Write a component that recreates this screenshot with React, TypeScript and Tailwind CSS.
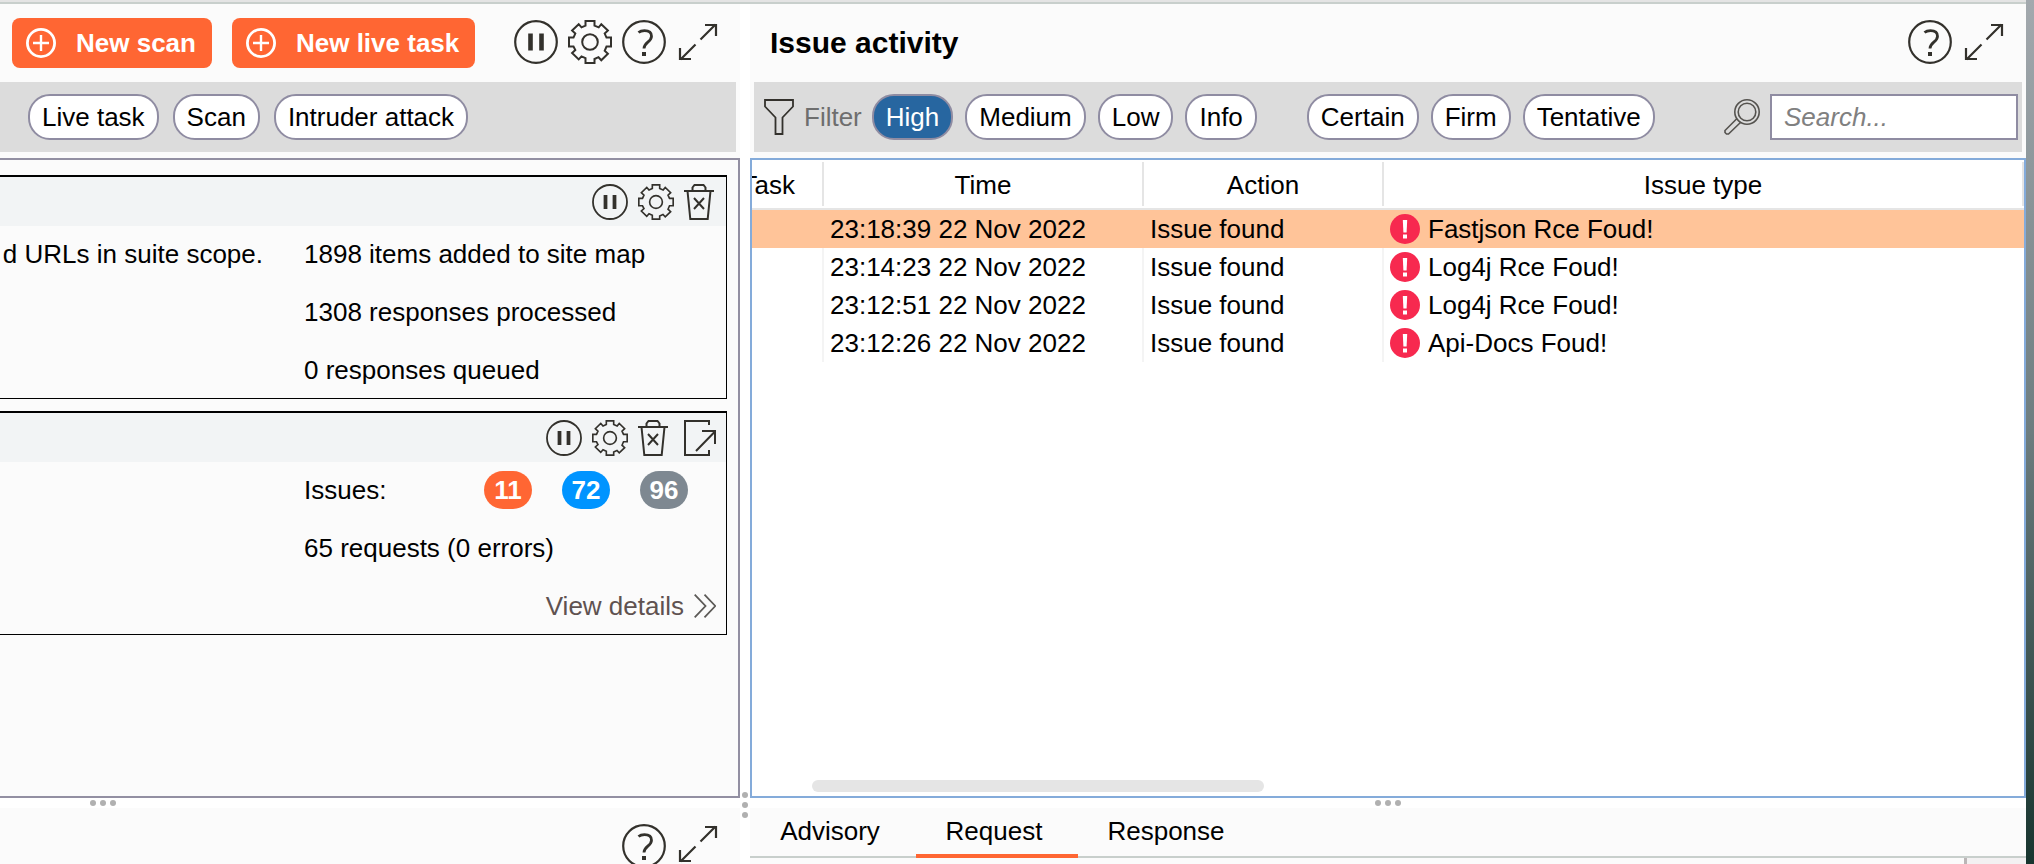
import type { ReactNode } from "react";

type IconProps = { className?: string };

const INK = "#33312c";

function PlusCircleIcon() {
  return (
    <svg className="size-[30px] shrink-0" viewBox="0 0 30 30" fill="none" stroke="#fff" aria-hidden="true">
      <circle cx="15" cy="15" r="13.6" strokeWidth="2.8" />
      <path d="M15 7v16M7 15h16" strokeWidth="2.4" />
    </svg>
  );
}

function PauseIcon({ className }: IconProps) {
  return (
    <svg className={className} viewBox="0 0 44 44" fill="none" stroke={INK} aria-hidden="true">
      <circle cx="22" cy="22" r="20.8" strokeWidth="2.2" />
      <path d="M16.5 13.5v17M27.5 13.5v17" strokeWidth="4.6" />
    </svg>
  );
}

function GearIcon({ className }: IconProps) {
  return (
    <svg className={className} viewBox="0 0 44 44" fill="none" stroke={INK} strokeWidth="2" aria-hidden="true">
      <circle cx="22" cy="22" r="7.8" />
      <path d="M17.5 1h9v4.6l4.2 1.8 2.6-3.2 6.6 6.4-3.2 3 1.8 4H43v9h-4.5l-1.8 4.2 3.2 3-6.6 6.4-2.8-3-4 1.8V43h-9v-4.800l-4-1.800-2.800 3-6.600-6.400 3.200-3L5.500 26.600H1v-9h4.500l1.800-4-3.200-3 6.600-6.400 2.800 3.200 4-1.800z" />
    </svg>
  );
}

function HelpIcon({ className }: IconProps) {
  return (
    <svg className={className} viewBox="0 0 44 44" fill="none" stroke={INK} aria-hidden="true">
      <circle cx="22" cy="22" r="20.8" strokeWidth="2.2" />
      <path d="M16.500 12.500C18 11.200 20 10.600 22.500 10.600c4.300 0 7 2 7 5.600 0 5.800-7.500 6.200-7.500 12.300" strokeWidth="2.8" />
      <path d="M20 32h4v4h-4z" fill={INK} stroke="none" />
    </svg>
  );
}

function ExpandIcon({ className }: IconProps) {
  return (
    <svg className={className} viewBox="0 0 40 40" fill="none" stroke={INK} strokeWidth="2.2" aria-hidden="true">
      <path d="M22.500 17.500L37.500 2.500M27 3h11v11M17.500 22.500L2.500 37.500M2 26v11h11" />
    </svg>
  );
}

function TrashIcon({ className }: IconProps) {
  return (
    <svg className={className} viewBox="0 0 30 36" fill="none" stroke={INK} strokeWidth="2" aria-hidden="true">
      <path d="M0 7h30M8.500 7V3.500L10.500 1h9l2 2.500V7M3.500 7l2.800 28h17.400l2.800-28M10 14l10 11M20 14L10 25" />
    </svg>
  );
}

function OpenIcon({ className }: IconProps) {
  return (
    <svg className={className} viewBox="0 0 32 36" fill="none" stroke={INK} strokeWidth="2" aria-hidden="true">
      <path d="M25 5V1H1v34h24v-5M12 31l18.500-19M18 11h13v13" />
    </svg>
  );
}

function FunnelIcon() {
  return (
    <svg className="h-9 w-[30px] shrink-0" viewBox="0 0 30 36" fill="none" stroke={INK} strokeWidth="1.8" aria-hidden="true">
      <path d="M1 1h28v6.500L18.500 18.500V35h-7V18.500L1 7.500z" />
    </svg>
  );
}

function SearchIcon() {
  return (
    <svg className="size-9 shrink-0" viewBox="0 0 36 36" fill="none" stroke="#55534f" strokeWidth="1.600" aria-hidden="true">
      <circle cx="23" cy="13" r="12.200" />
      <circle cx="23" cy="13" r="8.800" />
      <path d="M13 19.500L1 31.500v2l1.500 1.500h2L17 23" />
    </svg>
  );
}

function ChevronsIcon() {
  return (
    <svg className="h-6 w-[22px]" viewBox="0 0 22 24" fill="none" stroke="#5c5a57" strokeWidth="1.800" aria-hidden="true">
      <path d="M.7.7L11.500 12 .7 23.300M10.500.7L21.300 12 10.500 23.300" />
    </svg>
  );
}

function AlertIcon() {
  return (
    <svg className="size-[30px] shrink-0" viewBox="0 0 30 30" aria-hidden="true">
      <circle cx="15" cy="15" r="15" fill="#f7294f" />
      <path d="M12.800 6h4.400l-.6 12.500h-3.200z" fill="#fff" />
      <path d="M13 20.500h4v4h-4z" fill="#fff" />
    </svg>
  );
}

function IconButton({ label, children }: { label: string; children: ReactNode }) {
  return (
    <button type="button" aria-label={label} className="shrink-0">
      {children}
    </button>
  );
}

function PrimaryButton({ children }: { children: ReactNode }) {
  return (
    <button
      type="button"
      className="flex h-[50px] items-center gap-5 rounded-lg bg-[#ff6633] pr-4 pl-3.5 font-bold whitespace-nowrap text-white"
    >
      <PlusCircleIcon />
      {children}
    </button>
  );
}

function Pill({ children, active = false }: { children: ReactNode; active?: boolean }) {
  return (
    <button
      type="button"
      aria-pressed={active}
      className={`flex h-[46px] items-center rounded-[22px] border-2 border-[#8f8ca2] px-3 whitespace-nowrap ${
        active ? "bg-[#2766a0] text-white" : "bg-white text-black"
      }`}
    >
      {children}
    </button>
  );
}

function Dots({ vertical = false }: { vertical?: boolean }) {
  return (
    <span className={vertical ? "flex flex-col gap-1" : "flex gap-1"}>
      <i className="size-1.5 rounded-full bg-[#b0b0b0]" />
      <i className="size-1.5 rounded-full bg-[#b0b0b0]" />
      <i className="size-1.5 rounded-full bg-[#b0b0b0]" />
    </span>
  );
}

function TaskCard({ tools, description, children }: { tools: ReactNode; description?: string; children: ReactNode }) {
  return (
    <article className="h-56 border-t-2 border-r border-b border-black">
      <header className="flex h-[49px] items-center bg-[#f2f4f5] pr-2.5">
        <div className="ml-auto flex items-center gap-2.5">{tools}</div>
      </header>
      <div className="flex pt-[9px]">
        <div className="flex h-[38px] w-[263px] shrink-0 items-center justify-end overflow-hidden whitespace-nowrap">
          {description}
        </div>
        <div className="ml-[41px] flex flex-1 flex-col gap-5 pr-2.5">{children}</div>
      </div>
    </article>
  );
}

function CountBadge({ tone, children }: { tone: string; children: ReactNode }) {
  return (
    <span className={`flex h-[38px] w-12 items-center justify-center rounded-[19px] font-bold text-white ${tone}`}>
      {children}
    </span>
  );
}

const issues = [
  { time: "23:18:39 22 Nov 2022", action: "Issue found", type: "Fastjson Rce Foud!" },
  { time: "23:14:23 22 Nov 2022", action: "Issue found", type: "Log4j Rce Foud!" },
  { time: "23:12:51 22 Nov 2022", action: "Issue found", type: "Log4j Rce Foud!" },
  { time: "23:12:26 22 Nov 2022", action: "Issue found", type: "Api-Docs Foud!" },
];

function TasksPane() {
  return (
    <section className="flex w-[740px] shrink-0 flex-col bg-[#fbfbfb]">
      <header className="flex h-[78px] shrink-0 items-center pl-3">
        <div className="flex gap-5">
          <PrimaryButton>New scan</PrimaryButton>
          <PrimaryButton>New live task</PrimaryButton>
        </div>
        <div className="mr-[22px] mb-0.5 ml-auto flex items-center gap-2.5">
          <IconButton label="Pause all"><PauseIcon className="size-11" /></IconButton>
          <IconButton label="Settings"><GearIcon className="size-11" /></IconButton>
          <IconButton label="Help"><HelpIcon className="size-11" /></IconButton>
          <IconButton label="Expand"><ExpandIcon className="ml-0.5 size-10" /></IconButton>
        </div>
      </header>
      <div className="mr-1 mb-1.5 flex h-[70px] shrink-0 items-center gap-3.5 bg-[#dcdcdc] pl-7">
        <Pill>Live task</Pill>
        <Pill>Scan</Pill>
        <Pill>Intruder attack</Pill>
      </div>
      <div className="flex flex-1 flex-col gap-3 border-2 border-l-0 border-[#928fa2] pt-[15px] pr-[11px]">
        <TaskCard
          description="d URLs in suite scope."
          tools={
            <>
              <IconButton label="Pause task"><PauseIcon className="size-9" /></IconButton>
              <IconButton label="Task settings"><GearIcon className="size-9" /></IconButton>
              <IconButton label="Delete task"><TrashIcon className="mr-0.5 h-9 w-[30px]" /></IconButton>
            </>
          }
        >
          <p className="flex h-[38px] items-center">1898 items added to site map</p>
          <p className="flex h-[38px] items-center">1308 responses processed</p>
          <p className="flex h-[38px] items-center">0 responses queued</p>
        </TaskCard>
        <TaskCard
          tools={
            <>
              <IconButton label="Pause task"><PauseIcon className="size-9" /></IconButton>
              <IconButton label="Task settings"><GearIcon className="size-9" /></IconButton>
              <IconButton label="Delete task"><TrashIcon className="mr-1.5 h-9 w-[30px]" /></IconButton>
              <IconButton label="Open task"><OpenIcon className="h-9 w-8" /></IconButton>
            </>
          }
        >
          <div className="flex h-[38px] items-center justify-between pr-7">
            Issues:
            <div className="flex gap-[30px]">
              <CountBadge tone="bg-[#ff6633]">11</CountBadge>
              <CountBadge tone="bg-[#0094ff]">72</CountBadge>
              <CountBadge tone="bg-[#7e8891]">96</CountBadge>
            </div>
          </div>
          <p className="flex h-[38px] items-center">65 requests (0 errors)</p>
          <a href="#details" className="flex h-[38px] items-center gap-2.5 self-end text-[#5f5250]">
            View details
            <ChevronsIcon />
          </a>
        </TaskCard>
      </div>
      <div className="flex h-2.5 shrink-0 items-center bg-white pl-[90px]">
        <Dots />
      </div>
      <div className="flex h-14 shrink-0 justify-end gap-2.5 overflow-hidden pt-4 pr-[22px]">
        <IconButton label="Help"><HelpIcon className="size-11" /></IconButton>
        <IconButton label="Expand"><ExpandIcon className="ml-0.5 size-10" /></IconButton>
      </div>
    </section>
  );
}

function IssueTable() {
  return (
    <table className="w-full table-fixed border-separate border-spacing-0 text-left">
      <colgroup>
        <col className="w-[72px]" />
        <col className="w-[320px]" />
        <col className="w-[240px]" />
        <col />
      </colgroup>
      <thead>
        <tr>
          {["Task", "Time", "Action", "Issue type"].map((name, i) => (
            <th key={name} scope="col" className="border-b-2 border-[#e5e5e5] p-0 py-0.5 font-normal">
              <div
                className={`flex h-11 items-center overflow-hidden border-r-2 border-[#e5e5e5] pt-0.5 ${
                  i === 0 ? "justify-end pr-[27px]" : "justify-center"
                }`}
              >
                {name}
              </div>
            </th>
          ))}
        </tr>
      </thead>
      <tbody>
        {issues.map((issue, i) => {
          const cell = `h-[38px] p-0 pl-1.5 whitespace-nowrap ${i === 0 ? "" : "border-r-2 border-[#f4f4f4]"}`;
          return (
            <tr key={issue.time} className={i === 0 ? "bg-[#ffc499]" : "bg-white"}>
              <td className={cell} />
              <td className={cell}>{issue.time}</td>
              <td className={cell}>{issue.action}</td>
              <td className="h-[38px] p-0 pl-1.5">
                <span className="flex items-center gap-2">
                  <AlertIcon />
                  {issue.type}
                </span>
              </td>
            </tr>
          );
        })}
      </tbody>
    </table>
  );
}

function IssuesPane() {
  return (
    <section className="flex min-w-0 flex-1 flex-col bg-[#fbfbfb]">
      <header className="flex h-[78px] shrink-0 items-center pr-[22px] pl-5">
        <h1 className="text-[30px] leading-[38px] font-bold">Issue activity</h1>
        <div className="mb-0.5 ml-auto flex items-center gap-2.5">
          <IconButton label="Help"><HelpIcon className="size-11" /></IconButton>
          <IconButton label="Expand"><ExpandIcon className="ml-0.5 size-10" /></IconButton>
        </div>
      </header>
      <div className="mx-1 mb-1.5 flex h-[70px] shrink-0 items-center bg-[#dcdcdc] pr-1 pl-2.5">
        <FunnelIcon />
        <span className="mx-2.5 text-[#6e6e6e]">Filter</span>
        <div className="flex gap-3">
          <Pill active>High</Pill>
          <Pill>Medium</Pill>
          <Pill>Low</Pill>
          <Pill>Info</Pill>
        </div>
        <div className="ml-[50px] flex gap-3">
          <Pill>Certain</Pill>
          <Pill>Firm</Pill>
          <Pill>Tentative</Pill>
        </div>
        <label htmlFor="issue-search" aria-label="Search" className="mr-2.5 ml-auto">
          <SearchIcon />
        </label>
        <input
          id="issue-search"
          type="text"
          placeholder="Search..."
          className="h-[46px] w-[248px] border-2 border-[#8f8ca2] bg-white px-3 outline-none placeholder:text-[#808080] placeholder:italic"
        />
      </div>
      <div className="flex min-h-0 flex-1 flex-col justify-between border-2 border-[#84abda] bg-white pb-1">
        <IssueTable />
        <div className="px-[60px]">
          <div className="h-3 w-[452px] rounded-full bg-[#e5e5e5]" />
        </div>
      </div>
      <div className="flex h-2.5 shrink-0 items-center justify-center bg-white">
        <Dots />
      </div>
      <div className="flex h-[50px] shrink-0 items-stretch border-b-2 border-[#c8cfcc]" role="tablist">
        <button type="button" role="tab" aria-selected="false" className="-mb-0.5 w-[166px] pr-1.5 pb-1">Advisory</button>
        <button type="button" role="tab" aria-selected="true" className="-mb-0.5 w-[162px] border-b-4 border-[#ff6633] pr-1.5">Request</button>
        <button type="button" role="tab" aria-selected="false" className="-mb-0.5 w-[182px] pr-1.5 pb-1">Response</button>
      </div>
      <div className="flex h-1.5 shrink-0 justify-end">
        <div className="w-[62px] border-l-[3px] border-[#bbb6b7] bg-[#f3f1f2]" />
      </div>
    </section>
  );
}

export default function App() {
  return (
    <main className="flex h-screen overflow-hidden bg-white font-['Liberation_Sans',Arial,sans-serif] text-[26px] leading-[30px] text-black">
      <div className="flex min-w-0 flex-1 flex-col">
        <div className="h-1 shrink-0 border-b-2 border-[#c8cfcc] bg-[#e4e4e4]" />
        <div className="flex min-h-0 flex-1">
          <TasksPane />
          <div className="flex w-2.5 shrink-0 flex-col items-center justify-end pb-[46px]">
            <Dots vertical />
          </div>
          <IssuesPane />
        </div>
      </div>
      <div className="w-2 shrink-0 bg-linear-to-b from-[#a3a9ae] via-[#6d7d80] to-[#17352f]" />
    </main>
  );
}
